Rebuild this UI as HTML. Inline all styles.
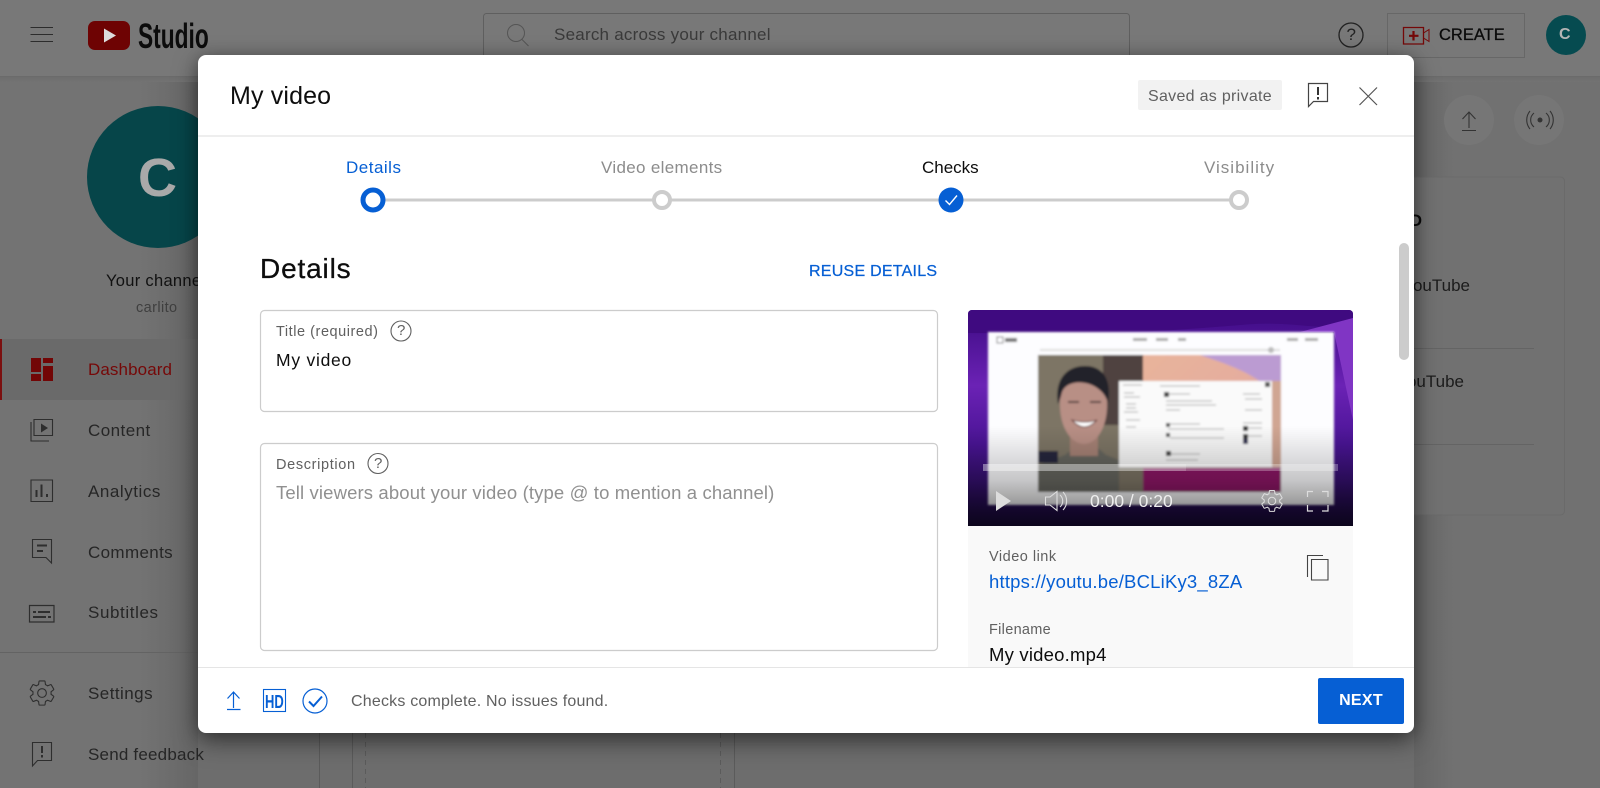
<!DOCTYPE html>
<html lang="en"><head><meta charset="utf-8"><title>My video</title>
<style>
html,body{margin:0;padding:0}
body{width:1600px;height:788px;overflow:hidden;position:relative;background:#6d6d6d;font-family:"Liberation Sans",Arial,sans-serif}
.t{position:absolute;white-space:nowrap;line-height:20px}
.a{position:absolute}
svg{position:absolute;left:0;top:0;overflow:visible}
.nav{left:88px;font-size:17px;color:#262626;letter-spacing:.45px}
#modal{position:absolute;left:198px;top:55px;width:1216px;height:678px;background:#fff;border-radius:8px;box-shadow:0 8px 24px rgba(0,0,0,.5),0 0 14px rgba(0,0,0,.15)}
</style></head><body>

<div class="a" style="left:0;top:0;width:1600px;height:76px;background:#787878;border-bottom:1px solid #6b6b6b"></div>
<div class="a" style="left:0;top:77px;width:1600px;height:5px;background:linear-gradient(#6d6d6d,#737373)"></div>
<div class="a" style="left:0;top:82px;width:198px;height:706px;background:linear-gradient(90deg,#737373,#737373 140px,#666 198px)"></div>
<div class="a" style="left:1414px;top:82px;width:186px;height:706px;background:linear-gradient(90deg,#666,#717171 40px)"></div>
<div class="a" style="left:0;top:339px;width:198px;height:61px;background:#6a6a6a"></div>

<svg width="1600" height="788" fill="none">
 <!-- header -->
 <path d="M30.500 27.500H53M30.500 34.500H53M30.500 41.500H53" stroke="#2c2c2c" stroke-width="1"/>
 <rect x="88" y="21" width="42" height="29" rx="7" fill="#6e0303"/>
 <path d="M104 28.500L116 35.500L104 42.500Z" fill="#ddd"/>
 <rect x="483.500" y="13.500" width="646" height="60" rx="3" stroke="#5f5f5f"/>
 <circle cx="516" cy="33" r="8.500" stroke="#555"/><path d="M522 39.500L528.500 46" stroke="#555"/>
 <circle cx="1351" cy="35" r="12" stroke="#222" stroke-width="1.300"/>
 <rect x="1387.500" y="13.500" width="137" height="44" stroke="#676767"/>
 <path d="M1403.500 27.500H1423.500V44H1403.500Z" stroke="#740808" stroke-width="1.300"/>
 <path d="M1423.500 33L1429 29.500V41.500L1423.500 38" stroke="#740808" stroke-width="1"/>
 <path d="M1413.500 31V40.500M1409 35.800H1418.500" stroke="#740808" stroke-width="2.200"/>
 <circle cx="1566" cy="35" r="20" fill="#064b50"/>
 <!-- right background -->
 <circle cx="1469" cy="120" r="25" fill="#767676"/>
 <circle cx="1539" cy="120" r="25" fill="#767676"/>
 <path d="M1469 112V128M1462.500 119L1469 112L1475.500 119M1462 130.500H1476" stroke="#333" stroke-width="1.100"/>
 <circle cx="1540" cy="120" r="2.500" fill="#333"/>
 <path d="M1534 113a9 9 0 0 0 0 14M1546 113a9 9 0 0 1 0 14M1530 111a14 14 0 0 0 0 18M1550 111a14 14 0 0 1 0 18" stroke="#333" stroke-width="1.100"/>
 <rect x="1400.500" y="177" width="164" height="338" rx="4" fill="#717171" stroke="#6a6a6a"/>
 <path d="M1414 348.500H1534M1414 444.500H1534" stroke="#646464"/>
 <!-- bottom lines -->
 <path d="M319.500 733V788M352.500 733V788M734.500 733V788" stroke="#5b5b5b"/>
 <path d="M365.500 733V788M720.500 733V788" stroke="#5b5b5b" stroke-dasharray="5 4"/>
 <path d="M0 652.500H198" stroke="#636363"/>
 <!-- sidebar -->
 <circle cx="158" cy="177" r="71" fill="#064549"/>
 <rect x="0" y="339" width="2" height="61" fill="#7b0f0f"/>
 <path d="M31 358H41V372H31ZM43 358H53V363H43ZM43 366H53V381H43ZM31 374H41V381H31Z" fill="#720606"/>
 <path d="M34 419.500H52.500V435.500H34ZM31 422V441H49" stroke="#2e2e2e" stroke-width="1.100"/>
 <path d="M41 423.500L48 428L41 432.500Z" fill="#2e2e2e"/>
 <path d="M31 480H52.500V501.500H31Z" stroke="#2e2e2e" stroke-width="1.100"/>
 <path d="M36.500 490V497M41.500 484.500V497M47 494V497" stroke="#2e2e2e" stroke-width="2"/>
 <path d="M32.500 539.500H51.500V563L46 557.500H32.500Z" stroke="#2e2e2e" stroke-width="1.100"/>
 <path d="M37 545.500H47M37 551H43" stroke="#2e2e2e" stroke-width="2"/>
 <path d="M29.500 605.500H54V622H29.500Z" stroke="#2e2e2e" stroke-width="1.200"/>
 <path d="M33 612H36M38 612H50M33 617H46M48 617H51" stroke="#2e2e2e" stroke-width="2"/>
 <g transform="translate(27.500,678.500) scale(1.210)" stroke="#2e2e2e" stroke-width=".9">
  <path d="M19.430 12.980c.04-.32.07-.64.07-.98s-.03-.66-.07-.98l2.110-1.650c.19-.15.24-.42.12-.64l-2-3.460c-.12-.22-.39-.3-.61-.22l-2.490 1c-.52-.4-1.080-.73-1.690-.98l-.38-2.650C14.460 2.180 14.250 2 14 2h-4c-.25 0-.46.18-.49.42l-.38 2.650c-.61.25-1.170.59-1.690.98l-2.490-1c-.23-.09-.49 0-.61.22l-2 3.460c-.13.22-.07.49.12.64l2.110 1.650c-.04.32-.07.65-.07.98s.03.66.07.98l-2.110 1.650c-.19.15-.24.42-.12.64l2 3.460c.12.22.39.3.61.22l2.490-1c.52.4 1.080.73 1.690.98l.38 2.650c.03.24.24.42.49.42h4c.25 0 .46-.18.49-.42l.38-2.650c.61-.25 1.170-.59 1.690-.98l2.490 1c.23.09.49 0 .61-.22l2-3.460c.12-.22.07-.49-.12-.64l-2.110-1.650z"/>
  <circle cx="12" cy="12" r="3.600"/>
 </g>
 <path d="M32.500 742.500H51.500V760.500H37.500L32.500 766Z" stroke="#2e2e2e" stroke-width="1.100"/>
 <path d="M42 746V753M42 755V757.500" stroke="#2e2e2e" stroke-width="2"/>
</svg>

<div class="t" style="left:138px;top:18px;font-size:35px;line-height:38px;font-weight:700;color:#0c0c0c;transform:scaleX(.65);transform-origin:0 0">Studio</div>
<div class="t" style="left:554px;top:25px;font-size:17px;color:#3a3a3a;letter-spacing:.23px">Search across your channel</div>
<div class="t" style="left:1346.500px;top:25px;font-size:17px;color:#222">?</div>
<div class="t" style="left:1439px;top:25px;font-size:16.500px;color:#0b0b0b;-webkit-text-stroke:.3px #0b0b0b">CREATE</div>
<div class="t" style="left:1559px;top:25px;font-size:16px;color:#b5b5b5;font-weight:700">C</div>
<div class="t" style="left:138px;top:150px;font-size:54px;line-height:56px;color:#a9a9a9;font-weight:700">C</div>
<div class="t" style="left:106px;top:271px;font-size:16.500px;color:#111;letter-spacing:.3px">Your channel</div>
<div class="t" style="left:136px;top:298px;font-size:14.500px;color:#3f3f3f;letter-spacing:.4px">carlito</div>
<div class="t nav" style="top:360px;color:#760808;letter-spacing:.1px">Dashboard</div>
<div class="t nav" style="top:421px">Content</div>
<div class="t nav" style="top:482px;letter-spacing:.55px">Analytics</div>
<div class="t nav" style="top:543px;letter-spacing:.35px">Comments</div>
<div class="t nav" style="top:603px;letter-spacing:.6px">Subtitles</div>
<div class="t nav" style="top:684px">Settings</div>
<div class="t nav" style="top:745px;letter-spacing:.2px">Send feedback</div>
<div class="t" style="left:1414px;top:211px;font-size:17px;color:#0a0a0a;font-weight:700;width:8px;overflow:hidden;direction:rtl">D</div>
<div class="t" style="left:1414px;top:276px;font-size:17px;color:#1c1c1c;width:56px;overflow:hidden;direction:rtl">YouTube</div>
<div class="t" style="left:1414px;top:372px;font-size:17px;color:#1c1c1c;width:50px;overflow:hidden;direction:rtl">YouTube</div>

<div id="modal"></div>

<svg width="1600" height="788" fill="none">
 <rect x="198" y="135" width="1216" height="2" fill="#eee"/>
 <rect x="198" y="667" width="1216" height="1" fill="#e5e5e5"/>
 <!-- header icons -->
 <rect x="1138" y="80" width="144" height="30" rx="2" fill="#f2f2f2"/>
 <path d="M1308.500 83.500H1327.500V101.500H1313.500L1308.500 106.500Z" stroke="#444" stroke-width="1.200"/>
 <path d="M1318 87V95M1318 97V99.500" stroke="#333" stroke-width="2"/>
 <path d="M1359.500 87.500L1377 105M1377 87.500L1359.500 105" stroke="#555" stroke-width="1.200"/>
 <!-- stepper -->
 <path d="M373 200H1239" stroke="#ccc" stroke-width="3"/>
 <circle cx="373" cy="200" r="10" fill="#fff" stroke="#065fd4" stroke-width="5"/>
 <circle cx="662" cy="200" r="8" fill="#fff" stroke="#ccc" stroke-width="4"/>
 <circle cx="951" cy="200" r="12.500" fill="#065fd4"/>
 <path d="M945.500 200.500L949.500 204.500L957 195.500" stroke="#fff" stroke-width="1.400"/>
 <circle cx="1239" cy="200" r="8" fill="#fff" stroke="#ccc" stroke-width="4"/>
 <!-- fields -->
 <rect x="260.500" y="310.500" width="677" height="101" rx="4" stroke="#ccc" stroke-width="1.200"/>
 <rect x="260.500" y="443.500" width="677" height="207" rx="4" stroke="#ccc" stroke-width="1.200"/>
 <circle cx="401" cy="331" r="10" stroke="#606060" stroke-width="1.100"/>
 <circle cx="378" cy="463.500" r="10" stroke="#606060" stroke-width="1.100"/>
 <!-- panel -->
 <rect x="968" y="526" width="385" height="141" fill="#f9f9f9"/>
 <path d="M1311.500 559.500H1328V580H1311.500Z" stroke="#444" stroke-width="1.100"/>
 <path d="M1307.500 577V555.500H1323" stroke="#444" stroke-width="1.100"/>
 <!-- scrollbar -->
 <rect x="1399" y="243" width="10" height="117" rx="5" fill="#ccc"/>
 <!-- footer icons -->
 <path d="M233.500 692V708M227.500 698.500L233.500 692L239.500 698.500M227 709.500H240.500" stroke="#065fd4" stroke-width="1.200"/>
 <rect x="263.500" y="689.500" width="22" height="22" stroke="#065fd4" stroke-width="1.100"/>
 <circle cx="315" cy="701" r="12" stroke="#065fd4" stroke-width="1.200"/>
 <path d="M309 701.500L313.500 706L322 696.500" stroke="#065fd4" stroke-width="2"/>
 <!-- video -->
 <defs>
  <clipPath id="v"><path d="M972 310H1349a4 4 0 0 1 4 4V526H968V314a4 4 0 0 1 4-4Z"/></clipPath>
  <linearGradient id="p" x1="0" y1="0" x2="0" y2="1"><stop offset="0" stop-color="#3d0b83"/><stop offset=".35" stop-color="#6b22b5"/><stop offset=".62" stop-color="#4a1495"/><stop offset="1" stop-color="#1a0a3e"/></linearGradient>
  <linearGradient id="sh" x1="0" y1="0" x2="0" y2="1"><stop offset="0" stop-color="#000" stop-opacity="0"/><stop offset=".55" stop-color="#000" stop-opacity=".22"/><stop offset=".85" stop-color="#000" stop-opacity=".45"/><stop offset="1" stop-color="#000" stop-opacity=".55"/></linearGradient>
  <linearGradient id="pk" x1="0" y1="0" x2="1" y2="1"><stop offset="0" stop-color="#e8b49b"/><stop offset=".45" stop-color="#e5ad9e"/><stop offset="1" stop-color="#bb9bd2"/></linearGradient>
  <filter id="b"><feGaussianBlur stdDeviation="1"/></filter>
 </defs>
 <g clip-path="url(#v)">
  <rect x="968" y="310" width="385" height="216" fill="url(#p)"/>
  <path d="M968 310H1353V326C1310 330 1290 320 1240 325C1180 330 1120 335 968 333Z" fill="#3f0a80"/>
  <path d="M1300 332L1353 318V420L1334 332Z" fill="#8035c4"/>
  <g filter="url(#b)">
   <rect x="988" y="332" width="346" height="173" fill="#fdfdff"/>
   <rect x="997" y="337" width="6" height="6" stroke="#777"/>
   <rect x="1005" y="338" width="12" height="4" fill="#777"/>
   <rect x="1133" y="338" width="14" height="3" fill="#aaa"/><rect x="1156" y="338" width="12" height="3" fill="#aaa"/><rect x="1178" y="338" width="8" height="3" fill="#aaa"/>
   <rect x="1287" y="338" width="11" height="3" fill="#aaa"/><rect x="1305" y="338" width="13" height="3" fill="#aaa"/>
   <rect x="1040" y="349" width="240" height="2" fill="#ddd"/>
   <circle cx="1271" cy="350" r="3" fill="#bbb"/>
   <!-- video frame -->
   <rect x="1038" y="355" width="105" height="137" fill="#7d7565"/>
   <rect x="1103" y="355" width="40" height="70" fill="#4f4340"/>
   <rect x="1143" y="355" width="138" height="137" fill="url(#pk)"/>
   <path d="M1200 355H1281V400C1260 375 1230 365 1200 355Z" fill="#bb9bd2"/>
   <rect x="1143" y="467" width="138" height="25" fill="#8d1566"/>
   <rect x="1272" y="381" width="9" height="86" fill="#d0a592"/>
   <!-- person -->
   <path d="M1038 492V465L1065 455L1074 448H1098L1106 455L1119 460V492Z" fill="#66665f"/>
   <rect x="1038" y="451" width="20" height="12" fill="#27253e"/>
   <rect x="1070" y="436" width="28" height="20" fill="#a58175"/>
   <path d="M1060 402C1058 388 1062 376 1084 376C1104 376 1109 388 1107 402C1108 425 1098 444 1084 444C1070 444 1059 425 1060 402Z" fill="#b88f85"/>
   <path d="M1058 404C1054 378 1068 366 1085 366C1102 366 1112 378 1108 403C1102 380 1068 376 1062 392C1061 396 1060 400 1058 404Z" fill="#24242a"/>
   <path d="M1068 402H1079M1090 402H1101" stroke="#5a4540" stroke-width="2"/>
   <path d="M1072 420Q1084 434 1097 420Q1085 424 1072 420Z" fill="#fff" stroke="#6b403d"/>
   <!-- card -->
   <rect x="1119" y="381" width="153" height="86" fill="#fafafa"/>
   <path d="M1123 385H1142M1124 393H1134M1124 397H1140M1126 404H1136M1126 408H1136M1124 412H1138M1126 420H1140M1126 427H1136M1160 386H1200M1164 394H1190M1166 401H1212M1166 405H1216M1166 410H1180M1168 424H1200M1168 429H1224M1170 438H1224M1168 454H1200M1166 460H1198M1243 394H1260M1245 399H1262M1245 410H1262M1243 423H1262M1247 428H1262M1247 436H1262" stroke="#bbb" stroke-width="1.200"/>
   <rect x="1164" y="392" width="5" height="5" fill="#444"/><rect x="1166" y="423" width="4" height="4" fill="#555"/><rect x="1166" y="433" width="4" height="4" fill="#555"/><rect x="1166" y="451" width="5" height="5" fill="#444"/>
   <rect x="1243" y="426" width="5" height="5" fill="#333"/><rect x="1243" y="434" width="5" height="5" fill="#333"/><rect x="1243" y="439" width="5" height="5" fill="#335"/>
   <rect x="1265" y="382" width="5" height="5" fill="#555"/>
  </g>
  <rect x="968" y="426" width="385" height="100" fill="url(#sh)"/>
  <rect x="983" y="464" width="355" height="7" fill="#fff" opacity=".28"/>
  <rect x="983" y="464" width="203" height="7" fill="#fff" opacity=".18"/>
  <path d="M996 491L1011 501L996 511Z" fill="#ddd"/>
  <path d="M1045.500 497H1050L1057 491.500V510.500L1050 505H1045.500Z" stroke="#ddd" stroke-width="1.100"/>
  <path d="M1060 495a8 8 0 0 1 0 12M1063 492a13 13 0 0 1 0 18" stroke="#ddd" stroke-width="1.100"/>
  <g transform="translate(1259.500,488.500) scale(1.040)" stroke="#ddd" stroke-width="1">
   <path d="M19.430 12.980c.04-.32.07-.64.07-.98s-.03-.66-.07-.98l2.110-1.650c.19-.15.24-.42.12-.64l-2-3.460c-.12-.22-.39-.3-.61-.22l-2.490 1c-.52-.4-1.080-.73-1.690-.98l-.38-2.650C14.460 2.180 14.250 2 14 2h-4c-.25 0-.46.18-.49.42l-.38 2.650c-.61.25-1.170.59-1.690.98l-2.490-1c-.23-.09-.49 0-.61.22l-2 3.460c-.13.22-.07.49.12.64l2.110 1.650c-.04.32-.07.65-.07.98s.03.66.07.98l-2.110 1.650c-.19.15-.24.42-.12.64l2 3.460c.12.22.39.3.61.22l2.490-1c.52.4 1.080.73 1.690.98l.38 2.650c.03.24.24.42.49.42h4c.25 0 .46-.18.49-.42l.38-2.650c.61-.25 1.170-.59 1.690-.98l2.490 1c.23.09.49 0 .61-.22l2-3.460c.12-.22.07-.49-.12-.64l-2.110-1.650z"/>
   <circle cx="12" cy="12" r="3.600"/>
  </g>
  <path d="M1307.500 497V491.500H1313M1322 491.500H1328V497M1328 505V511H1322M1313 511H1307.500V505" stroke="#ddd" stroke-width="1.200"/>
 </g>
</svg>

<div class="t" style="left:230px;top:82px;font-size:25px;line-height:28px;color:#0d0d0d;letter-spacing:.15px">My video</div>
<div class="t" style="left:1148px;top:86.500px;font-size:16px;color:#606060;letter-spacing:.3px">Saved as private</div>
<div class="t" style="left:346px;top:158px;font-size:17px;color:#065fd4;letter-spacing:.5px">Details</div>
<div class="t" style="left:601px;top:158px;font-size:17px;color:#8c8c8c;letter-spacing:.33px">Video elements</div>
<div class="t" style="left:922px;top:158px;font-size:17px;color:#0d0d0d;letter-spacing:0">Checks</div>
<div class="t" style="left:1204px;top:158px;font-size:17px;color:#8c8c8c;letter-spacing:1px">Visibility</div>
<div class="t" style="left:260px;top:253px;font-size:28px;line-height:32px;color:#0d0d0d;letter-spacing:.85px;-webkit-text-stroke:.3px #0d0d0d">Details</div>
<div class="t" style="left:809px;top:262px;font-size:16px;color:#065fd4;letter-spacing:.25px;-webkit-text-stroke:.25px #065fd4">REUSE DETAILS</div>
<div class="t" style="left:276px;top:322px;font-size:14.500px;color:#606060;letter-spacing:.55px">Title (required)</div>
<div class="t" style="left:397px;top:321px;font-size:15px;color:#606060">?</div>
<div class="t" style="left:276px;top:350px;font-size:17.500px;color:#0d0d0d;letter-spacing:.75px">My video</div>
<div class="t" style="left:276px;top:455px;font-size:14.500px;color:#606060;letter-spacing:.65px">Description</div>
<div class="t" style="left:374px;top:453.500px;font-size:15px;color:#606060">?</div>
<div class="t" style="left:276px;top:483px;font-size:18.500px;color:#909090;letter-spacing:.13px">Tell viewers about your video (type @ to mention a channel)</div>
<div class="t" style="left:1090px;top:491px;font-size:17.500px;color:#eee">0:00 / 0:20</div>
<div class="t" style="left:989px;top:547px;font-size:14.500px;color:#606060;letter-spacing:.5px">Video link</div>
<div class="t" style="left:989px;top:572px;font-size:18.500px;color:#065fd4;letter-spacing:.2px">https://youtu.be/BCLiKy3_8ZA</div>
<div class="t" style="left:989px;top:620px;font-size:14.500px;color:#606060;letter-spacing:.3px">Filename</div>
<div class="t" style="left:989px;top:645px;font-size:18.500px;color:#0d0d0d;letter-spacing:.2px">My video.mp4</div>
<div class="t" style="left:265px;top:691.500px;font-size:18px;color:#065fd4;font-weight:700;transform:scaleX(.72);transform-origin:0 0">HD</div>
<div class="t" style="left:351px;top:692px;font-size:16px;color:#606060;letter-spacing:.2px">Checks complete. No issues found.</div>
<div class="a" style="left:1318px;top:678px;width:86px;height:46px;background:#065fd4;border-radius:2px;color:#fff;font-size:16px;font-weight:700;text-align:center;line-height:46px;letter-spacing:.3px">NEXT</div>
</body></html>
